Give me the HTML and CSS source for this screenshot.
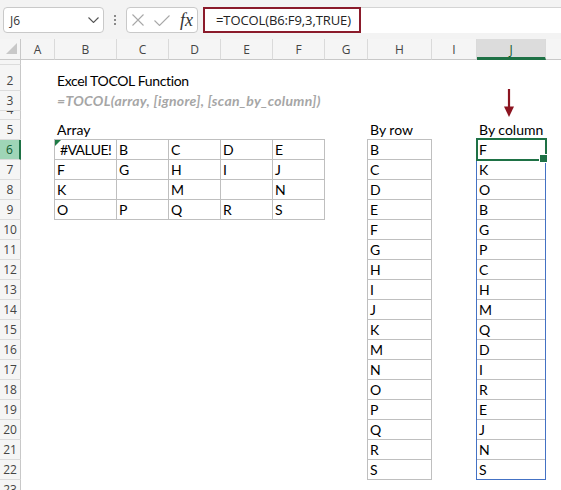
FILE: index.html
```html
<!DOCTYPE html>
<html>
<head>
<meta charset="utf-8">
<title>Excel TOCOL Function</title>
<link rel="stylesheet" href="styles.css">
</head>
<body>
<div class="app">
  <div class="toolbar">
    <div class="namebox">
      <span class="name">J6</span>
      <svg class="chev" width="11" height="6" viewBox="0 0 11 6"><path d="M0.5 0.5l5 5 5-5" fill="none" stroke="#555" stroke-width="1.1"/></svg>
    </div>
    <div class="grip"><i></i><i></i><i></i></div>
    <div class="fxgroup">
      <svg class="icon" width="12" height="12" viewBox="0 0 12 12"><path d="M0.5 0.5l11 11M11.5 0.5l-11 11" fill="none" stroke="#a8a8a8" stroke-width="1.1"/></svg>
      <svg class="icon" width="16" height="11" viewBox="0 0 16 11"><path d="M0.5 5.5l5 5 10-10" fill="none" stroke="#a8a8a8" stroke-width="1.1"/></svg>
      <span class="fx">fx</span>
    </div>
    <div class="formula-bar">
      <div class="formula-box">=TOCOL(B6:F9,3,TRUE)</div>
    </div>
  </div>

  <div class="sheet">
    <div class="corner"></div>
    <div class="ch">A</div>
    <div class="ch">B</div>
    <div class="ch">C</div>
    <div class="ch">D</div>
    <div class="ch">E</div>
    <div class="ch">F</div>
    <div class="ch">G</div>
    <div class="ch">H</div>
    <div class="ch">I</div>
    <div class="ch sel">J</div>
    <div class="ch last"></div>

    <div class="rh">1</div>
    <div class="rh">2</div>
    <div class="rh">3</div>
    <div class="rh">4</div>
    <div class="rh">5</div>
    <div class="rh sel">6</div>
    <div class="rh">7</div>
    <div class="rh">8</div>
    <div class="rh">9</div>
    <div class="rh">10</div>
    <div class="rh">11</div>
    <div class="rh">12</div>
    <div class="rh">13</div>
    <div class="rh">14</div>
    <div class="rh">15</div>
    <div class="rh">16</div>
    <div class="rh">17</div>
    <div class="rh">18</div>
    <div class="rh">19</div>
    <div class="rh">20</div>
    <div class="rh">21</div>
    <div class="rh">22</div>
    <div class="rh">23</div>

    <div class="cell title">Excel TOCOL Function</div>
    <div class="cell syntax">=TOCOL(array, [ignore], [scan_by_column])</div>

    <div class="cell label-array">Array</div>
    <div class="cell label-byrow">By row</div>
    <div class="cell label-bycol">By column</div>

    <svg class="arrow" width="12" height="28" viewBox="0 0 12 28">
      <path d="M6 0V19" stroke="#8c1420" stroke-width="2.2"/>
      <path d="M1 17.5H11L6 28Z" fill="#8c1420"/>
    </svg>

    <div class="array">
      <div class="cell err">#VALUE!</div><div class="cell">B</div><div class="cell">C</div><div class="cell">D</div><div class="cell">E</div>
      <div class="cell">F</div><div class="cell">G</div><div class="cell">H</div><div class="cell">I</div><div class="cell">J</div>
      <div class="cell">K</div><div class="cell"></div><div class="cell">M</div><div class="cell"></div><div class="cell">N</div>
      <div class="cell">O</div><div class="cell">P</div><div class="cell">Q</div><div class="cell">R</div><div class="cell">S</div>
    </div>

    <div class="list byrow">
      <div class="cell">B</div><div class="cell">C</div><div class="cell">D</div><div class="cell">E</div>
      <div class="cell">F</div><div class="cell">G</div><div class="cell">H</div><div class="cell">I</div>
      <div class="cell">J</div><div class="cell">K</div><div class="cell">M</div><div class="cell">N</div>
      <div class="cell">O</div><div class="cell">P</div><div class="cell">Q</div><div class="cell">R</div>
      <div class="cell">S</div>
    </div>

    <div class="list bycol">
      <div class="cell active">F</div><div class="cell">K</div><div class="cell">O</div><div class="cell">B</div>
      <div class="cell">G</div><div class="cell">P</div><div class="cell">C</div><div class="cell">H</div>
      <div class="cell">M</div><div class="cell">Q</div><div class="cell">D</div><div class="cell">I</div>
      <div class="cell">R</div><div class="cell">E</div><div class="cell">J</div><div class="cell">N</div>
      <div class="cell">S</div>
    </div>
  </div>
</div>
</body>
</html>
```

FILE: styles.css
```css
* { box-sizing: border-box; }

body {
  margin: 0;
  background: #ffffff;
  font-family: "Lato", "Liberation Sans", sans-serif;
}

.app {
  width: 561px;
  height: 490px;
  overflow: hidden;
  background: #ffffff;
}

/* ---------- formula toolbar ---------- */
.toolbar {
  height: 39px;
  background: #f3f3f3;
  display: flex;
  align-items: center;
  padding: 1px 0 0 3px;
}

.namebox {
  width: 101px;
  height: 26px;
  background: #ffffff;
  border: 1px solid #c9c9c9;
  border-radius: 4px;
  display: flex;
  align-items: center;
  justify-content: space-between;
  padding: 0 4px 0 6px;
  font-family: "Open Sans", sans-serif;
  font-size: 12px;
  color: #333333;
}

.grip {
  margin-left: 10px;
  display: flex;
  flex-direction: column;
  gap: 2px;
}
.grip i {
  display: block;
  width: 2px;
  height: 2px;
  background: #8a8a8a;
}

.fxgroup {
  margin-left: 10px;
  width: 72px;
  height: 26px;
  background: #ffffff;
  border: 1px solid #c9c9c9;
  border-radius: 4px;
  display: flex;
  align-items: center;
  padding-left: 5px;
  gap: 10px;
}
.icon { display: block; }
.fx {
  font-family: "Liberation Serif", serif;
  font-style: italic;
  font-size: 18px;
  line-height: 18px;
  color: #333333;
}

.formula-bar {
  margin-left: 5px;
  flex: 1;
  height: 26px;
  background: #ffffff;
  border-top: 1px solid #d4d4d4;
  display: flex;
}
.formula-box {
  width: 158px;
  height: 26px;
  margin-top: -1px;
  border: 2px solid #8b1b2b;
  padding-left: 11px;
  font-family: "Open Sans", sans-serif;
  font-size: 13px;
  letter-spacing: -0.1px;
  line-height: 22px;
  color: #222222;
  white-space: nowrap;
}

/* ---------- sheet grid ---------- */
.sheet {
  display: grid;
  grid-template-columns: 21px 34px 62px 52px 52px 52px 52px 43px 64px 45px 69px 1fr;
  grid-template-rows: 21px 5px 26px 20px 9px repeat(19, 20px);
  font-size: 14px;
  color: #000000;
}

.corner {
  background: #f5f5f5;
  border-right: 1px solid #c8c8c8;
  border-bottom: 1px solid #c8c8c8;
  display: flex;
  align-items: flex-end;
  justify-content: flex-end;
  padding: 0 3px 5px 0;
}
.corner::after {
  content: "";
  width: 0;
  height: 0;
  border-left: 11px solid transparent;
  border-bottom: 11px solid #c8c8c8;
}

.ch {
  background: #f5f5f5;
  border-right: 1px solid #dadada;
  border-bottom: 1px solid #c8c8c8;
  display: flex;
  align-items: center;
  justify-content: center;
  font-family: "Open Sans", sans-serif;
  font-size: 12px;
  color: #444444;
}
.ch.last { border-right: none; }
.ch.sel {
  background: #dcdcdc;
  border-bottom: 3px solid #1e7145;
  padding-top: 2px;
  color: #0f5a2e;
}

.rh {
  grid-column: 1;
  background: #f5f5f5;
  border-right: 1px solid #c8c8c8;
  border-bottom: 1px solid #dcdcdc;
  display: flex;
  align-items: flex-end;
  justify-content: center;
  overflow: hidden;
  font-family: "Open Sans", sans-serif;
  font-size: 12px;
  line-height: 19px;
  color: #444444;
}
.rh.sel {
  background: #9fd5b7;
  border-right: 2px solid #1e7145;
  color: #0f5a2e;
}

/* ---------- cells ---------- */
.cell {
  display: flex;
  align-items: flex-end;
  line-height: 19px;
  padding: 0 0 1px 2px;
  white-space: nowrap;
}

.title {
  grid-row: 3;
  grid-column: 3 / span 6;
  letter-spacing: -0.35px;
}
.syntax {
  grid-row: 4;
  grid-column: 3 / span 6;
  color: #a6a6a6;
  font-style: italic;
  font-weight: bold;
  letter-spacing: 0.3px;
}
.label-array { grid-row: 6; grid-column: 3 / span 2; }
.label-byrow { grid-row: 6; grid-column: 9; }
.label-bycol { grid-row: 6; grid-column: 11; }

.arrow {
  grid-row: 3 / 6;
  grid-column: 11;
  align-self: end;
  margin: 0 0 3px 26px;
  display: block;
}

.array {
  grid-row: 7 / 11;
  grid-column: 3 / 8;
  display: grid;
  grid-template-columns: 62px 52px 52px 52px 52px;
  grid-auto-rows: 20px;
  margin: -1px 0 0 -1px;
  border-left: 1px solid #bfbfbf;
  border-top: 1px solid #bfbfbf;
}
.array > .cell {
  border-right: 1px solid #bfbfbf;
  border-bottom: 1px solid #bfbfbf;
  padding-bottom: 0;
}
.array > .err {
  position: relative;
  justify-content: center;
  padding-left: 0;
  letter-spacing: -0.6px;
}
.array > .err::before {
  content: "";
  position: absolute;
  top: 0;
  left: 0;
  border-top: 6px solid #1e7b45;
  border-right: 6px solid transparent;
}

.list {
  grid-row: 7 / 24;
  margin: -1px 0 0 -1px;
  border: 1px solid #bfbfbf;
  border-bottom: none;
  display: flex;
  flex-direction: column;
}
.list > .cell {
  flex: none;
  height: 20px;
  border-bottom: 1px solid #bfbfbf;
  padding-bottom: 0;
}
.byrow { grid-column: 9; }
.bycol {
  grid-column: 11;
  border-left-color: #4472c4;
  border-right-color: #4472c4;
}
.bycol > .cell:last-child { border-bottom-color: #4472c4; }

.active { position: relative; }
.active::after {
  content: "";
  position: absolute;
  left: -1px;
  top: -2px;
  right: -2px;
  bottom: -2px;
  border: 2px solid #1e7145;
}
.active::before {
  content: "";
  position: absolute;
  right: -3px;
  bottom: -4px;
  width: 7px;
  height: 7px;
  background: #1e7145;
  border: 1px solid #ffffff;
  z-index: 2;
}
```
